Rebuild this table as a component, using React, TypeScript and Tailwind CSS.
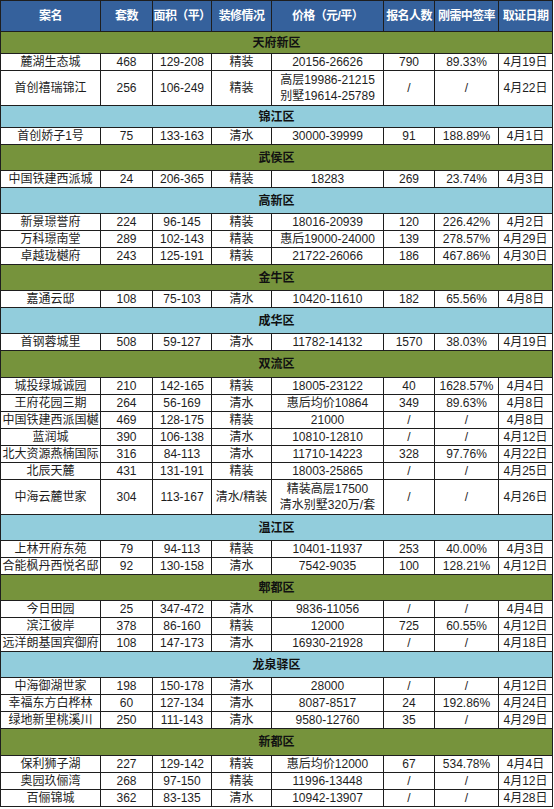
type Row = [string, string, string, string, string | [string, string], string, string, string];

type Section = {
  name: string;
  tone: "green" | "blue";
  h: string;
  rows: Row[];
};

const SECTIONS: Section[] = [
  {
    name: "天府新区", tone: "green", h: "h-[22px]",
    rows: [
      ["麓湖生态城", "468", "129-208", "精装", "20156-26626", "790", "89.33%", "4月19日"],
      ["首创禧瑞锦江", "256", "106-249", "精装", ["高层19986-21215", "别墅19614-25789"], "/", "/", "4月22日"],
    ],
  },
  {
    name: "锦江区", tone: "blue", h: "h-[22px]",
    rows: [["首创娇子1号", "75", "133-163", "清水", "30000-39999", "91", "188.89%", "4月1日"]],
  },
  {
    name: "武侯区", tone: "green", h: "h-[26px]",
    rows: [["中国铁建西派城", "24", "206-365", "精装", "18283", "269", "23.74%", "4月3日"]],
  },
  {
    name: "高新区", tone: "blue", h: "h-[26px]",
    rows: [
      ["新景璟誉府", "224", "96-145", "精装", "18016-20939", "120", "226.42%", "4月2日"],
      ["万科璟南堂", "289", "102-143", "精装", "惠后19000-24000", "139", "278.57%", "4月29日"],
      ["卓越珑樾府", "243", "125-191", "精装", "21722-26066", "186", "467.86%", "4月30日"],
    ],
  },
  {
    name: "金牛区", tone: "green", h: "h-[26px]",
    rows: [["嘉通云邸", "108", "75-103", "清水", "10420-11610", "182", "65.56%", "4月8日"]],
  },
  {
    name: "成华区", tone: "blue", h: "h-[26px]",
    rows: [["首钢蓉城里", "508", "59-127", "清水", "11782-14132", "1570", "38.03%", "4月19日"]],
  },
  {
    name: "双流区", tone: "green", h: "h-[27px]",
    rows: [
      ["城投绿城诚园", "210", "142-165", "精装", "18005-23122", "40", "1628.57%", "4月4日"],
      ["王府花园三期", "264", "56-169", "清水", "惠后均价10864", "349", "89.63%", "4月8日"],
      ["中国铁建西派国樾", "469", "128-175", "精装", "21000", "/", "/", "4月8日"],
      ["蓝润城", "390", "106-138", "清水", "10810-12810", "/", "/", "4月12日"],
      ["北大资源燕楠国际", "316", "84-113", "清水", "11710-14223", "328", "97.76%", "4月22日"],
      ["北辰天麓", "431", "131-191", "精装", "18003-25865", "/", "/", "4月25日"],
      ["中海云麓世家", "304", "113-167", "清水/精装", ["精装高层17500", "清水别墅320万/套"], "/", "/", "4月26日"],
    ],
  },
  {
    name: "温江区", tone: "blue", h: "h-[26px]",
    rows: [
      ["上林开府东苑", "79", "94-113", "精装", "10401-11937", "253", "40.00%", "4月3日"],
      ["合能枫丹西悦名邸", "92", "130-158", "清水", "7542-9035", "100", "128.21%", "4月12日"],
    ],
  },
  {
    name: "郫都区", tone: "green", h: "h-[26px]",
    rows: [
      ["今日田园", "25", "347-472", "清水", "9836-11056", "/", "/", "4月4日"],
      ["滨江彼岸", "378", "86-160", "精装", "12000", "725", "60.55%", "4月12日"],
      ["远洋朗基国宾御府", "108", "147-173", "清水", "16930-21928", "/", "/", "4月18日"],
    ],
  },
  {
    name: "龙泉驿区", tone: "blue", h: "h-[26px]",
    rows: [
      ["中海御湖世家", "198", "150-178", "清水", "28000", "/", "/", "4月12日"],
      ["幸福东方白桦林", "60", "127-134", "清水", "8087-8517", "24", "192.86%", "4月24日"],
      ["绿地新里桃溪川", "250", "111-143", "清水", "9580-12760", "35", "/", "4月29日"],
    ],
  },
  {
    name: "新都区", tone: "green", h: "h-[27px]",
    rows: [
      ["保利狮子湖", "227", "129-142", "精装", "惠后均价12000", "67", "534.78%", "4月4日"],
      ["奥园玖俪湾", "268", "97-150", "精装", "11996-13448", "/", "/", "4月12日"],
      ["百俪锦城", "362", "83-135", "清水", "10942-13907", "/", "/", "4月28日"],
    ],
  },
];

const HEAD = ["案名", "套数", "面积（平）", "装修情况", "价格（元/平）", "报名人数", "刚需中签率", "取证日期"];
const WIDTHS = ["w-[100px]", "w-[52px]", "w-[59px]", "w-[60px]", "w-[112px]", "w-[51px]", "w-[64px]", "w-[54px]"];

const cell = "border border-[#1e1e1e] p-0 text-center whitespace-nowrap overflow-hidden";

export default function App() {
  return (
    <div
      className="w-[554px] h-[809px] bg-white text-[12px] text-[#1e1e1e]"
      style={{ fontFamily: '"Liberation Sans", "Noto Sans CJK SC", sans-serif' }}
    >
      <table className="table-fixed border-collapse w-[553px] border border-[#1e1e1e]">
        <colgroup>
          {WIDTHS.map((w, i) => (
            <col key={i} className={w} />
          ))}
        </colgroup>
        <thead>
          <tr className="h-[31px] bg-[#35619c]">
            {HEAD.map((t) => (
              <th key={t} className={`${cell} font-bold text-white text-[12px] tracking-[-0.6px] leading-[15px]`}>
                {t}
              </th>
            ))}
          </tr>
        </thead>
        <tbody>
          {SECTIONS.map((s) => (
            <SectionRows key={s.name} section={s} />
          ))}
        </tbody>
      </table>
    </div>
  );
}

function SectionRows({ section }: { section: Section }) {
  return (
    <>
      <tr className={`${section.h} ${section.tone === "green" ? "bg-[#76933c]" : "bg-[#92cddc]"}`}>
        <td colSpan={8} className={`${cell} font-bold text-[#111]`}>
          {section.name}
        </td>
      </tr>
      {section.rows.map((r) => {
        const double = Array.isArray(r[4]);
        return (
          <tr key={r[0]} className={double ? "h-[35px]" : "h-[17px]"}>
            {r.map((v, i) => (
              <td key={i} className={`${cell} leading-[15px]`}>
                {Array.isArray(v) ? (
                  <>
                    <div className="leading-[16px]">{v[0]}</div>
                    <div className="leading-[16px]">{v[1]}</div>
                  </>
                ) : (
                  v
                )}
              </td>
            ))}
          </tr>
        );
      })}
    </>
  );
}
